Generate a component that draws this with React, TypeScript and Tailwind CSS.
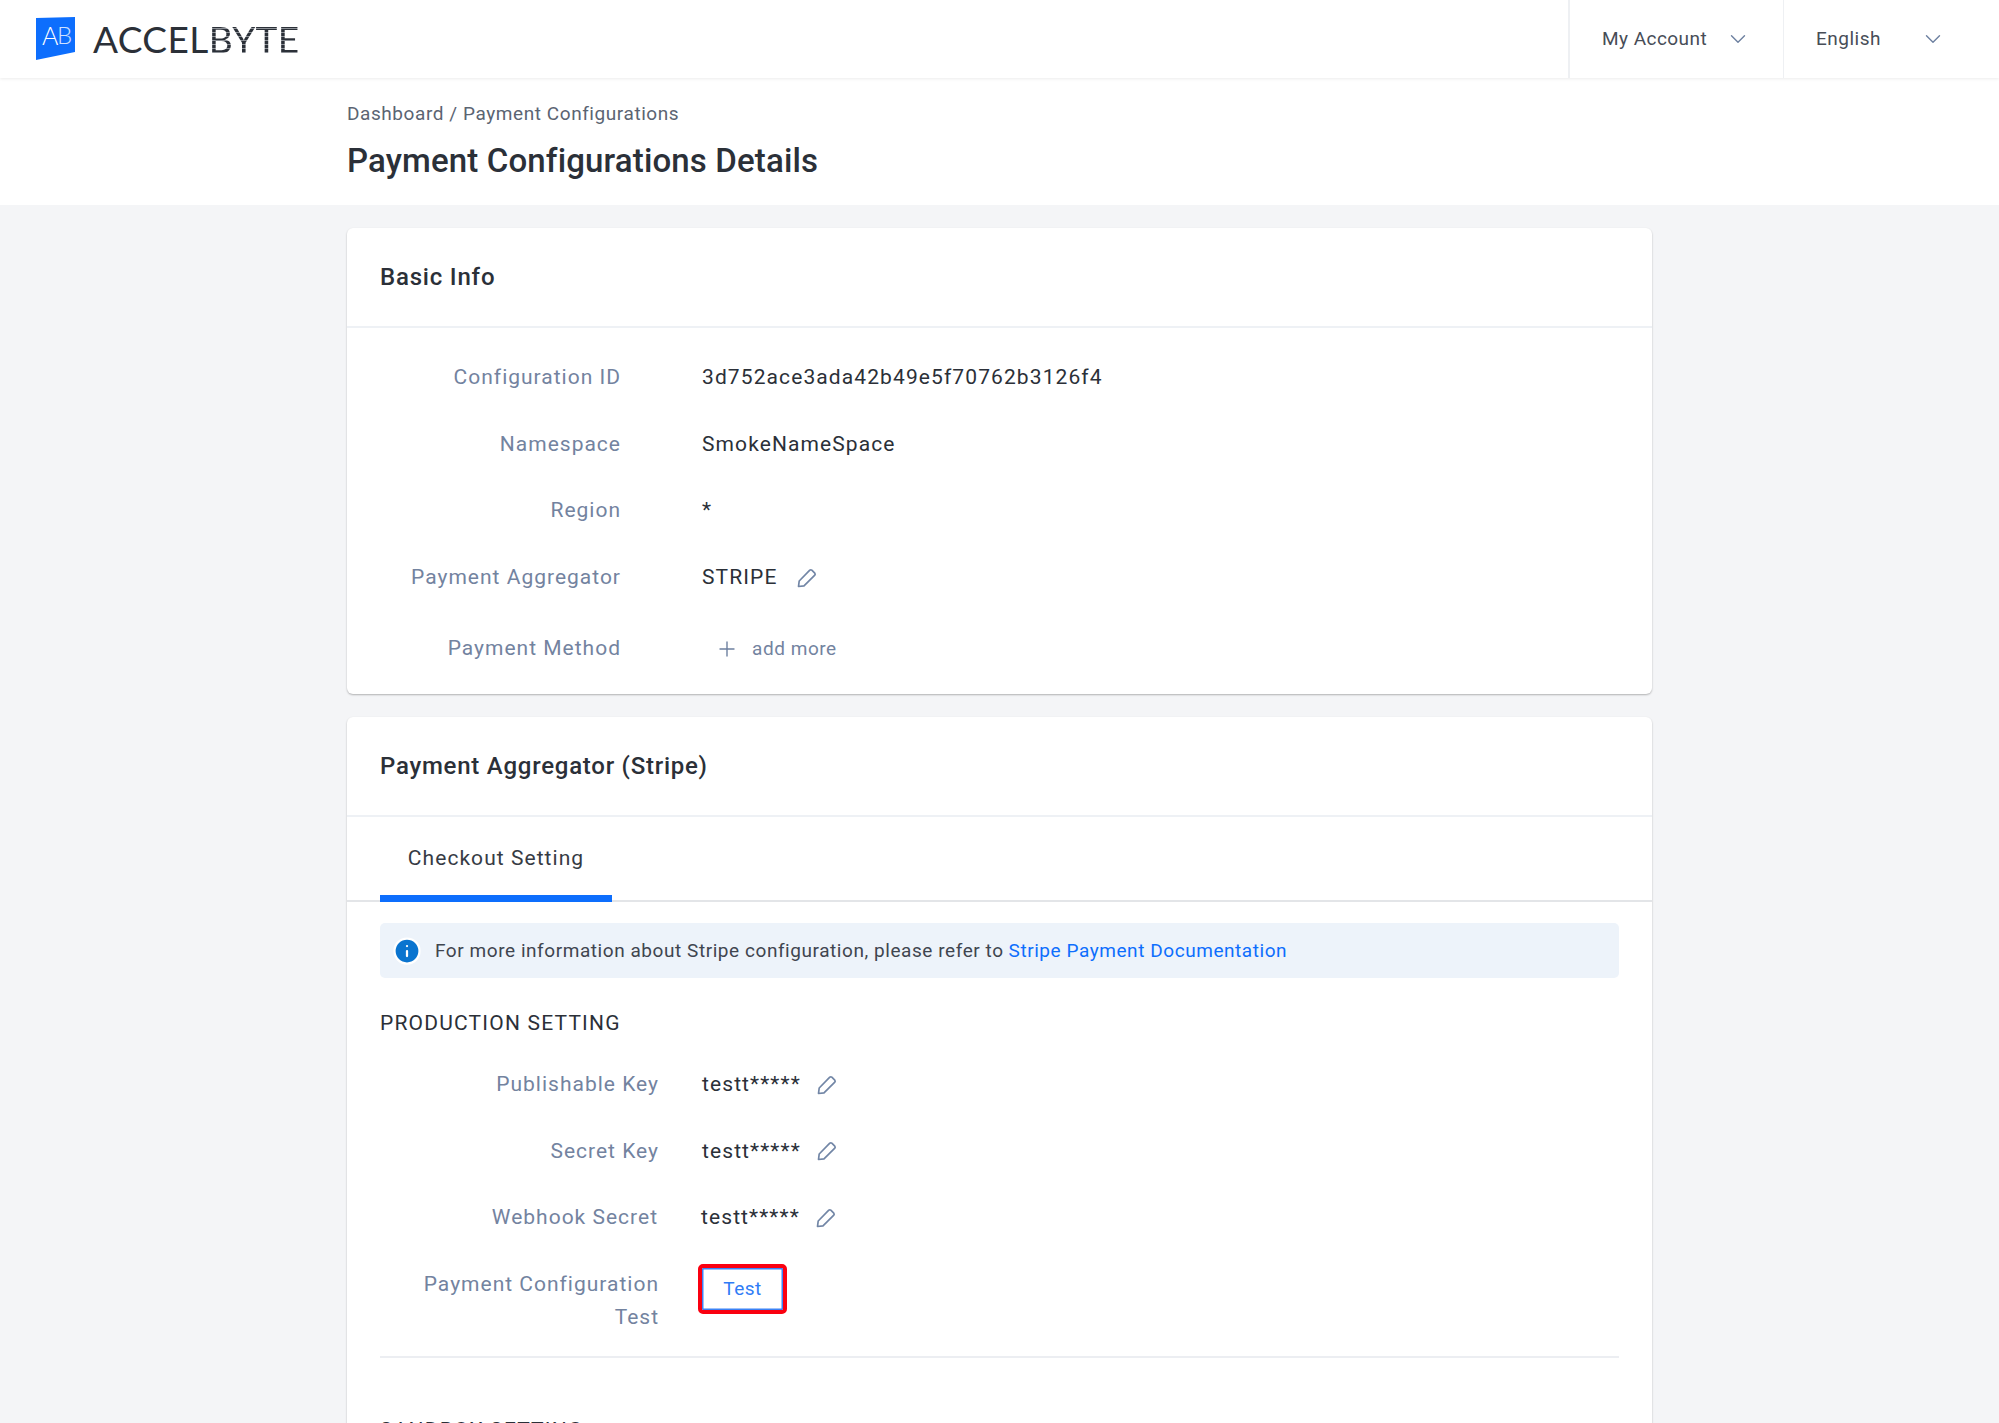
import { ChevronDown, Info, Plus } from "lucide-react";

const font = "font-['Roboto',sans-serif]";

function EditIcon() {
  return (
    <svg viewBox="0 0 20 20" fill="none" className="size-[20px] text-[#7286a6]">
      <path
        d="M1.5 18.5 L2.2 13 L12.8 2.2 Q13.8 1.4 14.8 2.2 L17.8 5.2 Q18.6 6.2 17.8 7.2 L7 17.8 Z"
        stroke="currentColor"
        strokeWidth="1.7"
        strokeLinejoin="round"
      />
    </svg>
  );
}

function Row({
  label,
  labelWidth,
  className,
  children,
}: {
  label: string;
  labelWidth: string;
  className: string;
  children: React.ReactNode;
}) {
  return (
    <div className={`flex ${className}`}>
      <div
        className={`${labelWidth} shrink-0 text-right text-[21px] leading-[33px] tracking-[1px] text-[#73839f]`}
      >
        {label}
      </div>
      <div className="ml-[43px] flex h-[33px] items-center text-[21px] leading-[33px] tracking-[1.1px] text-[#2b3038]">
        {children}
      </div>
    </div>
  );
}

function Header() {
  return (
    <header className="relative z-10 flex h-[78px] items-stretch justify-between bg-white shadow-[0_1px_3px_rgba(0,0,0,0.08)]">
      <div className="flex items-center pl-9">
        <div className="relative h-[44px] w-[40px]">
          <svg viewBox="0 0 40 44" className="size-full">
            <polygon points="0,1 39,0 39,35 0,43" fill="#0d6efd" />
          </svg>
          <span className="absolute left-[6px] top-[4px] font-['Lato',sans-serif] text-[25px] leading-[28px] font-light text-white">
            A
          </span>
          <span className="absolute left-[21px] top-[4px] font-['Lato',sans-serif] text-[24px] leading-[28px] font-light text-white/80">
            B
          </span>
        </div>
        <div className="ml-[17px] flex font-['Lato',sans-serif] text-[37px] leading-[44px] font-normal tracking-[0.4px] text-[#2b3038]">
          <span>ACCEL</span>
          <span className="bg-[repeating-linear-gradient(to_bottom,#2b3038_0,#2b3038_3px,#8d9197_3px,#8d9197_4px)] bg-clip-text text-transparent">
            BYTE
          </span>
        </div>
      </div>
      <div className="flex items-stretch">
        <div className="flex w-[215px] items-center border-l-2 border-[#eef0f3] pl-[32px]">
          <span className="text-[19px] tracking-[0.45px] text-[#474d57]">My Account</span>
          <ChevronDown className="ml-[18px] size-[26px] text-[#6d80a0]" strokeWidth={1.3} />
        </div>
        <div className="flex w-[216px] items-center border-l border-[#eef0f3] pl-[32px]">
          <span className="w-[84px] text-[19px] tracking-[0.5px] text-[#474d57]">English</span>
          <ChevronDown className="ml-[20px] size-[26px] text-[#6d80a0]" strokeWidth={1.3} />
        </div>
      </div>
    </header>
  );
}

export default function App() {
  return (
    <div className={`${font} h-[1423px] overflow-hidden bg-[#f4f5f7]`}>
      <Header />
      <div className="h-[127px] bg-white pl-[347px] pt-[22px]">
        <div className="text-[19px] leading-[28px] tracking-[0.57px] text-[#5b6472]">
          Dashboard / Payment Configurations
        </div>
        <h1 className="mt-[11px] text-[33px] leading-[44px] font-medium tracking-[0.15px] text-[#2b3038]">
          Payment Configurations Details
        </h1>
      </div>

      <div className="ml-[347px] mt-[23px] flex w-[1305px] flex-col gap-[23px]">
        <section className="h-[466px] rounded-[6px] bg-white shadow-[0_1px_2px_rgba(0,0,0,0.28)]">
          <h2 className="flex h-[100px] items-center border-b-2 border-[#eef1f5] pl-[33px] text-[24px] font-medium tracking-[0.8px] text-[#2b3038]">
            Basic Info
          </h2>
          <div className="pt-[33px]">
            <Row label="Configuration ID" labelWidth="w-[274px]" className="h-[66.7px]">
              <span className="ml-[38px]">3d752ace3ada42b49e5f70762b3126f4</span>
            </Row>
            <Row label="Namespace" labelWidth="w-[274px]" className="h-[66.7px]">
              <span className="ml-[38px]">SmokeNameSpace</span>
            </Row>
            <Row label="Region" labelWidth="w-[274px]" className="h-[66.7px]">
              <span className="ml-[38px]">*</span>
            </Row>
            <Row label="Payment Aggregator" labelWidth="w-[274px]" className="h-[71px]">
              <span className="ml-[38px]">STRIPE</span>
              <span className="ml-[20px]">
                <EditIcon />
              </span>
            </Row>
            <Row label="Payment Method" labelWidth="w-[274px]" className="h-[60px]">
              <span className="ml-[51px] flex items-center text-[#73839f]">
                <Plus className="size-[24px] text-[#6d80a0]" strokeWidth={1.4} />
                <span className="ml-[13px] text-[19px] tracking-[0.55px]">add more</span>
              </span>
            </Row>
          </div>
        </section>

        <section className="h-[800px] rounded-[6px] bg-white shadow-[0_1px_2px_rgba(0,0,0,0.28)]">
          <h2 className="flex h-[100px] items-center border-b-2 border-[#eef1f5] pl-[33px] text-[24px] font-medium tracking-[0.75px] text-[#2b3038]">
            Payment Aggregator (Stripe)
          </h2>
          <div className="h-[85px] border-b-2 border-[#e3e5e8] pl-[33px]">
            <div className="flex h-[85px] w-[232px] items-center justify-center border-b-[7px] border-[#0d6efd] pt-[5px] text-[21px] tracking-[1.05px] text-[#363b44]">
              Checkout Setting
            </div>
          </div>
          <div className="px-[33px] pt-[21px]">
            <div className="flex h-[55px] items-center rounded-[5px] bg-[#edf3fa] pl-[12px] text-[19px] tracking-[0.56px] text-[#3f454f]">
              <Info className="size-[30px] fill-[#0a74cf] text-white" strokeWidth={1.8} />
              <span className="ml-[13px] pt-[1px]">For more information about Stripe configuration, please refer to</span>
              <span className="ml-[5px] pt-[1px] text-[#0d6efd]">Stripe Payment Documentation</span>
            </div>
            <div className="mt-[31px] text-[21px] leading-[28px] tracking-[1.2px] text-[#2b3038]">
              PRODUCTION SETTING
            </div>
            <div className="mt-[31px] -ml-[33px]">
              <Row label="Publishable Key" labelWidth="w-[312px]" className="h-[66.7px]">
                <span>testt*****</span>
                <span className="ml-[16px]">
                  <EditIcon />
                </span>
              </Row>
              <Row label="Secret Key" labelWidth="w-[312px]" className="h-[66.7px]">
                <span>testt*****</span>
                <span className="ml-[16px]">
                  <EditIcon />
                </span>
              </Row>
              <Row label="Webhook Secret" labelWidth="w-[311px]" className="h-[66.7px]">
                <span>testt*****</span>
                <span className="ml-[16px]">
                  <EditIcon />
                </span>
              </Row>
              <div className="flex h-[88px]">
                <div className="w-[312px] shrink-0 pl-[40px] text-right text-[21px] leading-[33px] tracking-[1px] text-[#73839f]">
                  Payment Configuration Test
                </div>
                <button className="ml-[39px] -mt-[4px] h-[50px] w-[89px] rounded-[5px] border-4 border-[#fa0010] bg-white text-[19px] tracking-[0.5px] text-[#2f7cf6] shadow-[inset_0_0_0_1.5px_#3b82f6]">
                  Test
                </button>
              </div>
            </div>
            <div className="border-t-2 border-[#eceef2] pt-[58px] text-[21px] leading-[28px] tracking-[1.2px] text-[#2b3038]">
              SANDBOX SETTING
            </div>
          </div>
        </section>
      </div>
    </div>
  );
}
